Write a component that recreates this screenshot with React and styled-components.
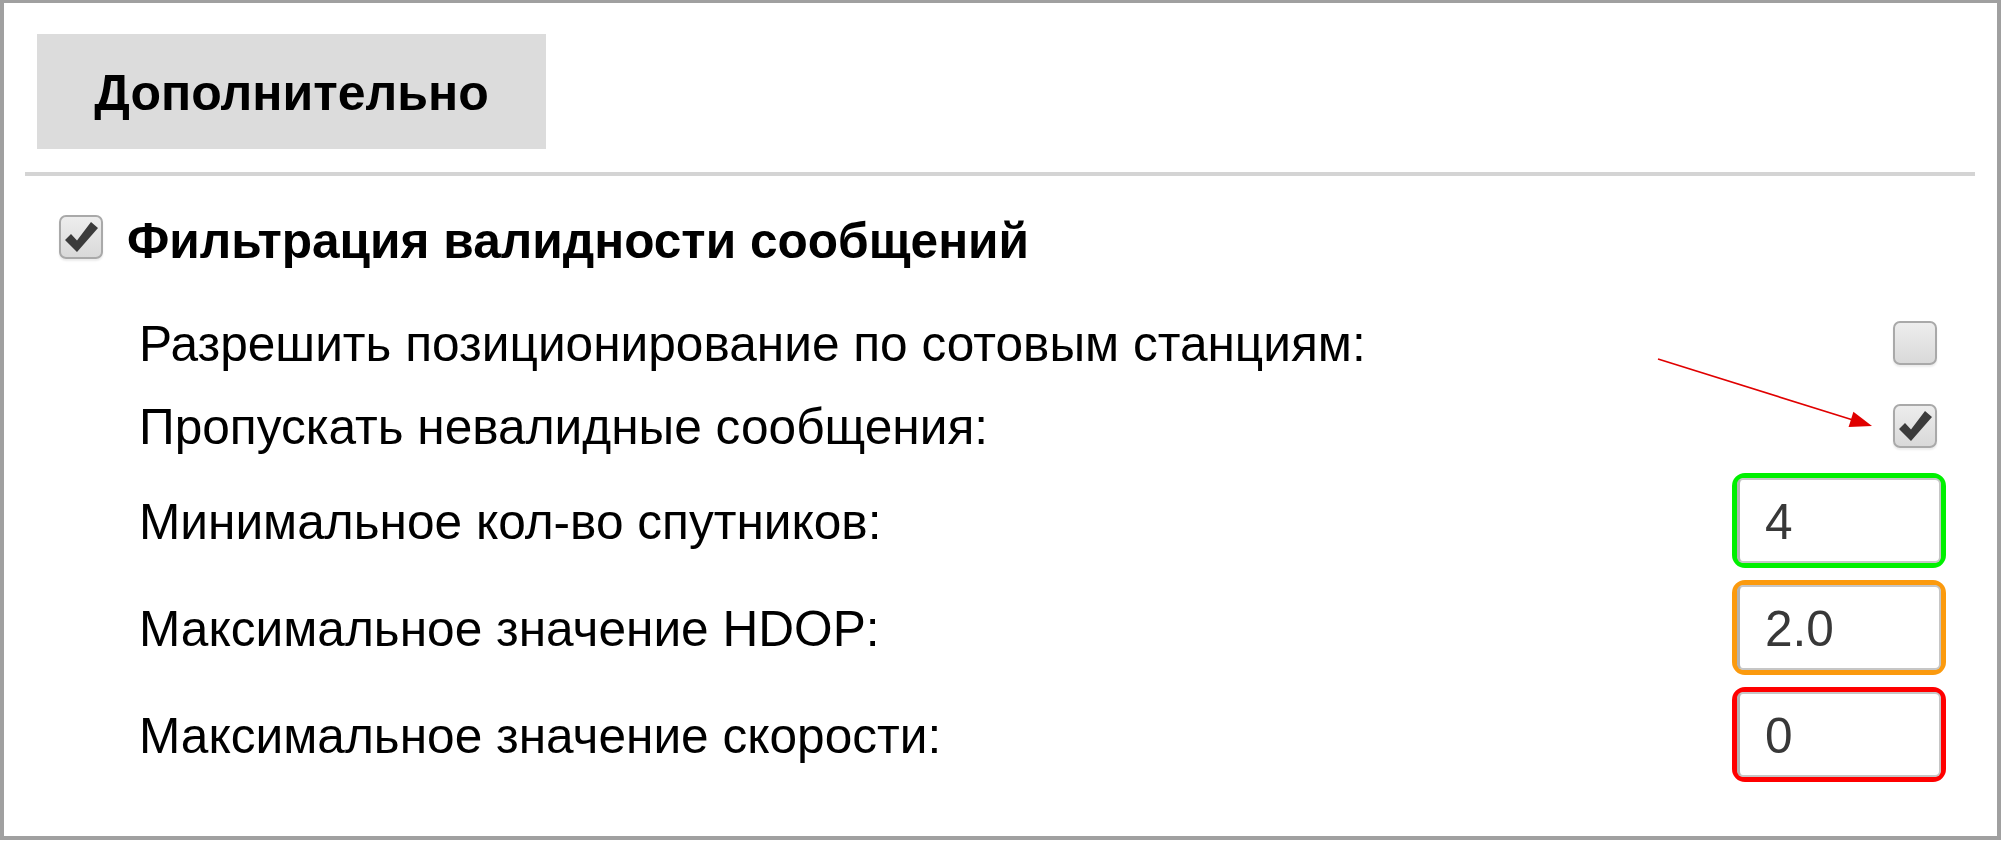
import React from "react";
import styled, { createGlobalStyle } from "styled-components";

const GlobalStyle = createGlobalStyle`
  html, body {
    margin: 0;
    padding: 0;
    background: #ffffff;
  }
  body {
    font-family: "Liberation Sans", Arial, sans-serif;
    color: #000;
  }
`;

const Frame = styled.div`
  position: relative;
  box-sizing: border-box;
  width: 2001px;
  height: 840px;
  border: 4px solid #a0a0a0;
  border-top-width: 3px;
  background: #fff;
  display: flex;
  flex-direction: column;
`;

const Tab = styled.div`
  box-sizing: border-box;
  margin: 31px 0 0 33px;
  width: 509px;
  height: 115px;
  background: #dcdcdc;
  display: flex;
  align-items: center;
  justify-content: center;
  font-size: 50px;
  font-weight: bold;
  padding-top: 2px;
`;

const Divider = styled.div`
  height: 4px;
  margin: 23px 22px 0 21px;
  background: #d4d4d4;
`;

const Header = styled.label`
  display: flex;
  align-items: center;
  gap: 24px;
  height: 44px;
  margin-top: 39px;
  padding-left: 55px;
  font-size: 49.6px;
  font-weight: bold;
`;

const HeaderText = styled.span`
  padding-top: 7px;
`;

const Options = styled.div`
  display: flex;
  flex-direction: column;
  margin-top: 42px;
  padding: 0 51px 0 135px;
`;

const Row = styled.div`
  display: flex;
  align-items: center;
  justify-content: space-between;
  height: ${(p) => (p.$tall ? 107 : 83)}px;
`;

const Label = styled.span`
  font-size: 49.6px;
  padding-top: 2px;
`;

const Control = styled.div`
  width: 214px;
  display: flex;
  justify-content: flex-end;
`;

const Box = styled.span`
  box-sizing: border-box;
  width: 44px;
  height: 44px;
  flex: none;
  margin-right: ${(p) => (p.$inset ? 9 : 0)}px;
  border: 2px solid #a9a9a9;
  border-radius: 7px;
  background: linear-gradient(#ededed, #d9d9d9);
  box-shadow: 0 2px 2px rgba(0, 0, 0, 0.08);
  display: flex;
  align-items: center;
  justify-content: center;
`;

const Highlight = styled.div`
  box-sizing: border-box;
  width: 214px;
  height: 95px;
  border: 5px solid ${(p) => p.$color};
  border-radius: 13px;
  display: flex;
`;

const Field = styled.div`
  flex: 1;
  box-sizing: border-box;
  border: 2px solid #c6c6c6;
  border-left: 3px solid #b2b2b2;
  border-radius: 6px;
  background: #fff;
  display: flex;
  align-items: center;
  padding: 2px 0 0 25px;
  font-size: 49.6px;
  color: #383838;
`;

const Arrow = styled.svg`
  position: absolute;
  left: 1636px;
  top: 337px;
  pointer-events: none;
`;

const Check = ({ checked, inset }) => (
  <Box $inset={inset}>
    {checked && (
      <svg width="40" height="40" viewBox="0 0 40 40">
        <path d="M4 23 L10 17 L16 23.5 L30 5 L37 11 L16 35 Z" fill="#3b3b3b" />
      </svg>
    )}
  </Box>
);

const rows = [
  { label: "Разрешить позиционирование по сотовым станциям:", check: false },
  { label: "Пропускать невалидные сообщения:", check: true },
  { label: "Минимальное кол-во спутников:", value: "4", color: "#00f000" },
  { label: "Максимальное значение HDOP:", value: "2.0", color: "#fb9a0e" },
  { label: "Максимальное значение скорости:", value: "0", color: "#ff0000" },
];

export default function App() {
  return (
    <>
      <GlobalStyle />
      <Frame>
        <Tab>Дополнительно</Tab>
        <Divider />
        <Header>
          <Check checked />
          <HeaderText>Фильтрация валидности сообщений</HeaderText>
        </Header>
        <Options>
          {rows.map((r) => (
            <Row key={r.label} $tall={r.value !== undefined}>
              <Label>{r.label}</Label>
              <Control>
                {r.value !== undefined ? (
                  <Highlight $color={r.color}>
                    <Field>{r.value}</Field>
                  </Highlight>
                ) : (
                  <Check checked={r.check} inset />
                )}
              </Control>
            </Row>
          ))}
        </Options>
        <Arrow width="240" height="100" viewBox="0 0 240 100">
          <line x1="18" y1="19" x2="213" y2="80" stroke="#e00000" strokeWidth="1.6" />
          <polygon points="232,86 208.6,87 213.4,71.8" fill="#e00000" />
        </Arrow>
      </Frame>
    </>
  );
}
